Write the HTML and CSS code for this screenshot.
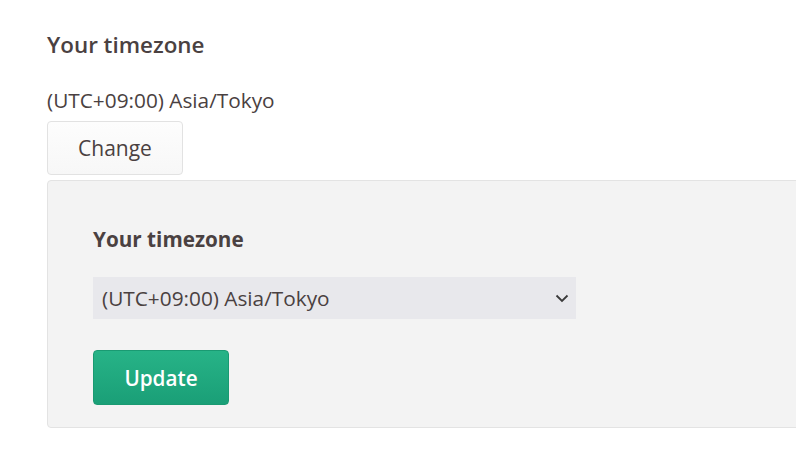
FILE: index.html
```html
<!DOCTYPE html>
<html>
<head>
<meta charset="utf-8">
<link rel="stylesheet" href="styles.css">
</head>
<body>
<div class="page">
  <h2 class="title">Your timezone</h2>
  <p class="current">(UTC+09:00) Asia/Tokyo</p>
  <button class="btn-change">Change</button>
  <div class="panel">
    <h3 class="panel-title">Your timezone</h3>
    <div class="select">
      <span>(UTC+09:00) Asia/Tokyo</span>
      <svg class="chev" width="14" height="9" viewBox="0 0 14 9"><path d="M1.5 1.5 L7 7 L12.5 1.5" fill="none" stroke="#3a3a3a" stroke-width="1.8"/></svg>
    </div>
    <button class="btn-update">Update</button>
  </div>
</div>
</body>
</html>
```

FILE: styles.css
```css
html, body {
  margin: 0;
  padding: 0;
  background: #ffffff;
  overflow: hidden;
}
.page {
  font-family: "Open Sans", "Noto Sans", sans-serif;
  color: #4a4141;
  padding: 29px 0 0 47px;
}
.title {
  margin: 0;
  font-size: 22.4px;
  font-weight: 600;
  line-height: 32px;
}
.current {
  margin: 25px 0 0 0;
  font-size: 20.8px;
  line-height: 28px;
}
.btn-change {
  display: block;
  margin-top: 7px;
  width: 136px;
  height: 54px;
  font-family: inherit;
  font-size: 21px;
  color: #4a4141;
  background: linear-gradient(#fdfdfd, #f7f7f7);
  border: 1px solid #e2e2e2;
  border-radius: 4px;
  padding: 0;
}
.panel {
  margin-top: 5px;
  width: 800px;
  box-sizing: border-box;
  background: #f3f3f3;
  border: 1px solid #e3e3e3;
  border-radius: 4px;
  padding: 44px 0 22px 45px;
}
.panel-title {
  margin: 0;
  font-size: 20.7px;
  font-weight: 700;
  line-height: 28px;
}
.select {
  margin-top: 24px;
  width: 483px;
  height: 42px;
  box-sizing: border-box;
  background: #e8e8ec;
  display: flex;
  align-items: center;
  justify-content: space-between;
  padding: 0 7px 0 9px;
  font-size: 20.8px;
}
.btn-update {
  display: block;
  margin-top: 31px;
  width: 136px;
  height: 55px;
  padding: 0;
  font-family: inherit;
  font-size: 20.7px;
  font-weight: 600;
  color: #ffffff;
  background: linear-gradient(#27b387, #1a9f77);
  border: 1px solid #1a9a72;
  border-radius: 4px;
}
```
